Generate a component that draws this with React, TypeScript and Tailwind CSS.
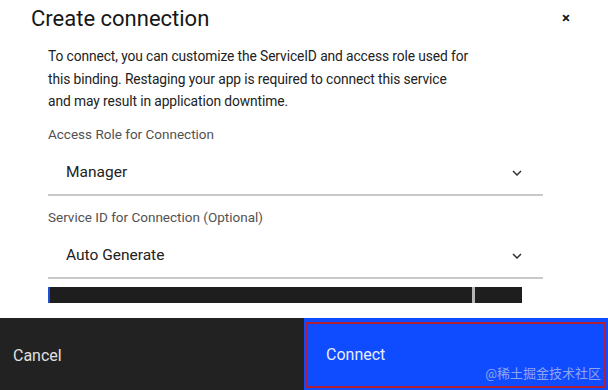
import React from "react";

function Chevron() {
  return (
    <svg width="10" height="6" viewBox="0 0 10 6" className="text-[#333]">
      <path d="M1 1 L5 5 L9 1" fill="none" stroke="currentColor" strokeWidth="1.5" />
    </svg>
  );
}

function Select({ label, value }: { label: string; value: string }) {
  return (
    <div className="flex flex-col">
      <div className="text-[13.5px] leading-[16px] text-[#525252]">{label}</div>
      <div className="mt-[11px] h-[43px] flex items-center justify-between pl-[18px] pr-[21px] border-b-[2px] border-[#c9c9c9]">
        <span className="text-[15.5px] text-[#222]">{value}</span>
        <Chevron />
      </div>
    </div>
  );
}

export default function App() {
  return (
    <div
      className="w-[608px] h-[390px] bg-white flex flex-col overflow-hidden"
      style={{ fontFamily: "Roboto, 'Noto Sans', 'Noto Sans CJK SC', sans-serif" }}
    >
      <div className="flex-1 flex flex-col">
        <div className="flex items-start justify-between pl-[31px] pr-[38px] pt-[5px]">
          <h1 className="text-[22px] leading-[28px] text-[#161616]">Create connection</h1>
          <span className="text-[15px] font-bold leading-[15px] mt-[6px] text-[#161616]">×</span>
        </div>
        <div className="pl-[48px] pr-[65px] mt-[12px]">
          <p className="text-[13.8px] tracking-[-0.1px] leading-[22.5px] text-[#222]">
            To connect, you can customize the ServiceID and access role used for
            <br />
            this binding. Restaging your app is required to connect this service
            <br />
            and may result in application downtime.
          </p>
          <div className="mt-[13px] flex flex-col gap-[13px]">
            <Select label="Access Role for Connection" value="Manager" />
            <Select label="Service ID for Connection (Optional)" value="Auto Generate" />
          </div>
          <div className="mt-[8px] flex h-[16px] w-[475px]">
            <div className="w-[2px] bg-[#1f4fd8]" />
            <div className="w-[422px] bg-[#1e1e1e]" />
            <div className="w-[3px] bg-[#b5b5b5]" />
            <div className="w-[47px] bg-[#1e1e1e]" />
          </div>
        </div>
      </div>
      <div className="h-[72px] flex">
        <div className="w-[304px] bg-[#222222] flex items-center pl-[13px] pt-[3px]">
          <span className="text-[16px] text-[#e0e0e0]">Cancel</span>
        </div>
        <div className="flex-1 bg-[#0f4cff] pt-[4px] pr-[2px] pb-[2px] pl-[1px]">
          <div className="h-full border-[2px] border-[#b0203a] relative flex items-center pl-[19px]">
            <span className="text-[16px] text-[#e8ecff]">Connect</span>
            <span className="absolute right-[3px] bottom-[3px] text-[13px] text-[#8fa4ee]">@稀土掘金技术社区</span>
          </div>
        </div>
      </div>
    </div>
  );
}
